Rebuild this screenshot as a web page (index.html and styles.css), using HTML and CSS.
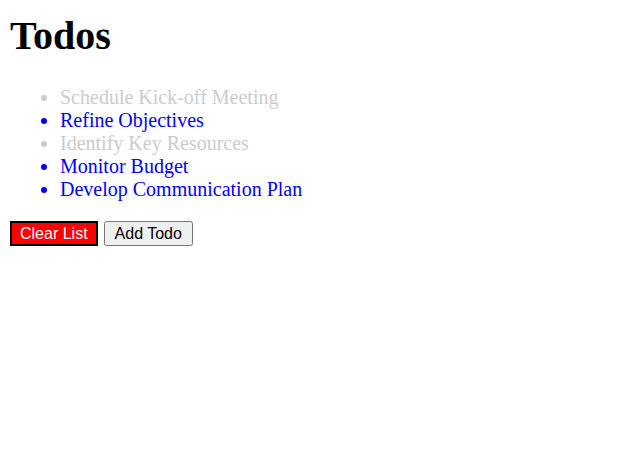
FILE: index.html
```html
<!DOCTYPE html>
<html lang="en">
<head>
  <meta charset="UTF-8" />
  <title>Todos</title>
  <link rel="stylesheet" href="styles.css">
</head>
<body>
  <h1>Todos</h1>
  <ul class="todo-list">
    <li class="done">Schedule Kick-off Meeting</li>
    <li>Refine Objectives</li>
    <li class="done">Identify Key Resources</li>
    <li>Monitor Budget</li>
    <li>Develop Communication Plan</li>
  </ul>
  <div class="actions">
    <button id="clearBtn">Clear List</button>
    <button id="addBtn">Add Todo</button>
  </div>
</body>
</html>
```

FILE: styles.css
```css
body {
  font-family: 'Liberation Serif', 'Times New Roman', serif;
  font-size: 20px;
  margin: 0 10px 10px;
}

h1 {
  font-size: 40px;
  margin: 12px 0 27px;
}

.todo-list {
  margin: 0 0 20px;
  padding-left: 50px;
  color: blue;
}

.todo-list .done {
  color: #cccccc;
}

.actions {
  display: flex;
  gap: 6px;
}

button {
  font-family: 'Liberation Sans', Arial, sans-serif;
  font-size: 16px;
  padding: 2px 8px 1px;
}

#addBtn {
  padding: 2px 9px 1px;
}

#clearBtn {
  background-color: red;
  color: white;
  border: 2px solid black;
}
```
